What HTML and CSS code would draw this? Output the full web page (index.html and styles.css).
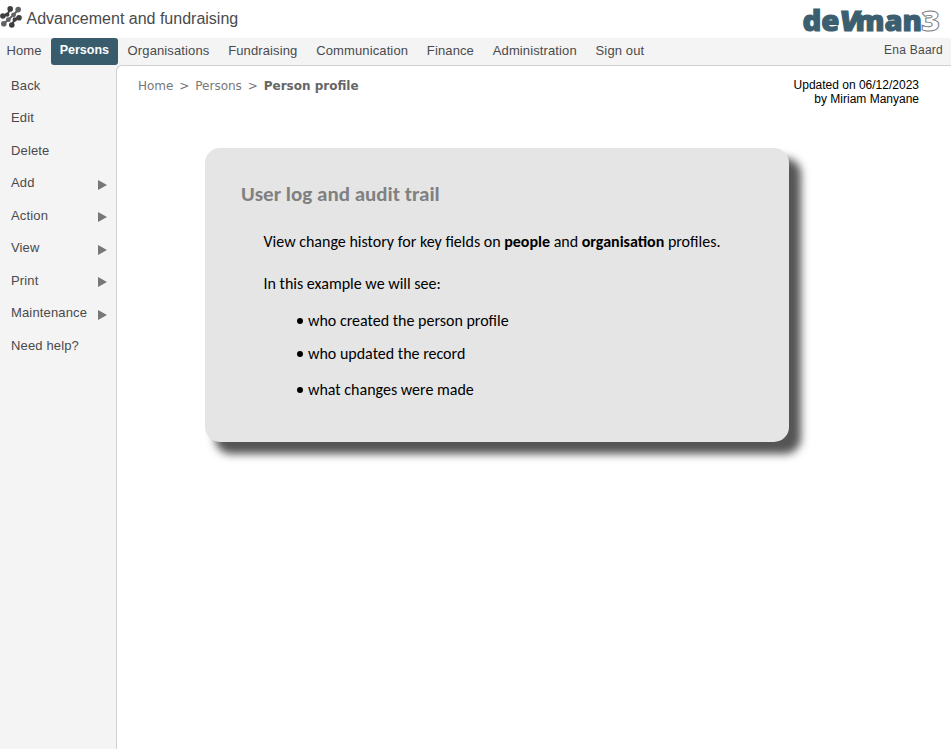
FILE: index.html
```html
<!DOCTYPE html>
<html lang="en">
<head>
<meta charset="utf-8">
<title>Person profile</title>
<link rel="stylesheet" href="styles.css">
</head>
<body>
<header class="top">
  <svg class="mark" width="22" height="22" viewBox="0 0 22 22" fill="#3e3e40" stroke="#3e3e40" stroke-width="2">
    <path d="M2.9 10 L7.4 8.6 L10.2 2.9 M11.8 19 L14.6 13.6 L19 11.7" fill="none"/>
    <path d="M3.6 17.8 L8 14 L13.4 9 L18.2 3.8" fill="none" stroke="#626264"/>
    <g stroke="none"><circle cx="10.2" cy="2.9" r="2.8"/><circle cx="18.2" cy="3.6" r="2.8" fill="#626264"/><circle cx="2.9" cy="10" r="2.8"/><circle cx="7.2" cy="8.6" r="2.2"/><circle cx="13.6" cy="8.8" r="2.4" fill="#626264"/><circle cx="3.8" cy="17.8" r="2.8" fill="#626264"/><circle cx="8.4" cy="13.7" r="2.4" fill="#626264"/><circle cx="19" cy="11.7" r="2.8"/><circle cx="14.8" cy="13.5" r="2.2"/><circle cx="11.8" cy="19" r="2.8"/></g>
  </svg>
  <h1 class="title">Advancement and fundraising</h1>
  <svg class="logo" width="144" height="38" viewBox="0 0 144 38">
    <text class="logo-word" x="2.5" y="31" textLength="37" lengthAdjust="spacingAndGlyphs">de</text>
    <text class="logo-word" transform="translate(38 31) skewX(-10)" textLength="20" lengthAdjust="spacingAndGlyphs">V</text>
    <text class="logo-word" x="55.5" y="31" textLength="66.5" lengthAdjust="spacingAndGlyphs">man</text>
    <text class="logo-num" x="121" y="31" textLength="19" lengthAdjust="spacingAndGlyphs">3</text>
  </svg>
</header>
<nav class="nav">
  <a class="tab home">Home</a><a class="tab active">Persons</a><a class="tab">Organisations</a><a class="tab">Fundraising</a><a class="tab">Communication</a><a class="tab">Finance</a><a class="tab">Administration</a><a class="tab">Sign out</a>
  <span class="user">Ena Baard</span>
</nav>
<div class="body">
  <aside class="side">
    <a class="item">Back</a>
    <a class="item">Edit</a>
    <a class="item">Delete</a>
    <a class="item more">Add</a>
    <a class="item more">Action</a>
    <a class="item more">View</a>
    <a class="item more">Print</a>
    <a class="item more">Maintenance</a>
    <a class="item">Need help?</a>
  </aside>
  <main class="content">
    <div class="bar">
      <div class="crumbs">Home<i>&gt;</i>Persons<i>&gt;</i><b>Person profile</b></div>
      <div class="updated">Updated on 06/12/2023<br>by Miriam Manyane</div>
    </div>
    <section class="card">
      <h2>User log and audit trail</h2>
      <p class="lead">View change history for key fields on <b>people</b> and <b>organisation</b> profiles.</p>
      <p class="example">In this example we will see:</p>
      <ul>
        <li class="created">who created the person profile</li>
        <li class="record">who updated the record</li>
        <li class="changes">what changes were made</li>
      </ul>
    </section>
  </main>
</div>
</body>
</html>
```
FILE: styles.css
```css
* { box-sizing: border-box; }
body { margin: 0; height: 749px; display: flex; flex-direction: column; overflow: hidden; background: #fff; color: #4a4a4c; font: 13px/16px "Liberation Sans", Arial, sans-serif; }
.top { height: 38px; display: flex; align-items: flex-start; flex: none; }
.mark { margin-top: 6px; }
.title { margin: 9px 0 0 4.5px; font-size: 16px; line-height: 20px; font-weight: 400; white-space: nowrap; }
.logo { margin: 0 7px 0 auto; }
.logo-word { font: 800 28px "Open Sans", sans-serif; fill: #3b5f70; stroke: #3b5f70; stroke-width: 1.1px; }
.logo-num { font: 800 29px "Open Sans", sans-serif; fill: #fff; stroke: #77777a; stroke-width: .9px; }
.nav { height: 28px; flex: none; display: flex; background: #f4f4f4; letter-spacing: .12px; }
.tab { height: 27px; line-height: 25px; padding: 0 9px; white-space: nowrap; }
.tab:nth-child(n+3) { padding: 0 9.2px 0 9.6px; }
.home { padding-left: 6.5px; }
.active { background: #395c6d; color: #fff; border-radius: 3px; font-weight: 700; font-size: 12.5px; letter-spacing: 0; }
.user { margin-left: auto; padding-right: 8px; line-height: 24px; font-size: 12px; letter-spacing: .25px; }
.body { flex: 1; display: flex; background: #f4f4f4; margin-top: -1px; }
.side { width: 116px; padding-top: 4.5px; letter-spacing: .15px; }
.item { display: flex; align-items: center; justify-content: space-between; height: 32.5px; padding: 0 9px 0 11px; }
.more::after { content: ""; border-left: 9px solid #77777a; border-top: 5px solid transparent; border-bottom: 5px solid transparent; margin-top: 3px; }
.content { flex: 1; background: #fff; border: 1px solid #d0d0d3; border-width: 1px 0 0 1px; border-top-left-radius: 6px; }
.bar { display: flex; justify-content: space-between; height: 82px; padding: 12px 32px 0 21px; }
.crumbs { font-family: "DejaVu Sans", Verdana, sans-serif; font-size: 12px; line-height: 16px; color: #77777a; white-space: nowrap; }
.crumbs i { font-style: normal; margin: 0 5.9px; }
.crumbs b { color: #666; }
.updated { font-size: 12px; line-height: 14px; color: #000; text-align: right; }
.card { width: 584px; height: 294px; margin-left: 88px; padding: 33px 36px; background: #e5e5e5; border-radius: 15px; box-shadow: 11px 11px 8px 1px #555; color: #000; font: 16px/20px Carlito, Lato, sans-serif; white-space: nowrap; }
h2 { margin: 0; font-size: 21px; line-height: 26px; color: #808080; }
p { margin: 0 0 0 22.5px; }
.lead { margin-top: 25px; }
.example { margin-top: 22px; }
ul { list-style: none; margin: 17px 0 0 56px; padding: 0; }
li { display: flex; align-items: center; }
li::before { content: ""; width: 6px; height: 6px; border-radius: 50%; background: #000; margin: 0 5px 0 0; }
.record { margin-top: 13px; }
.changes { margin-top: 16px; }
```
